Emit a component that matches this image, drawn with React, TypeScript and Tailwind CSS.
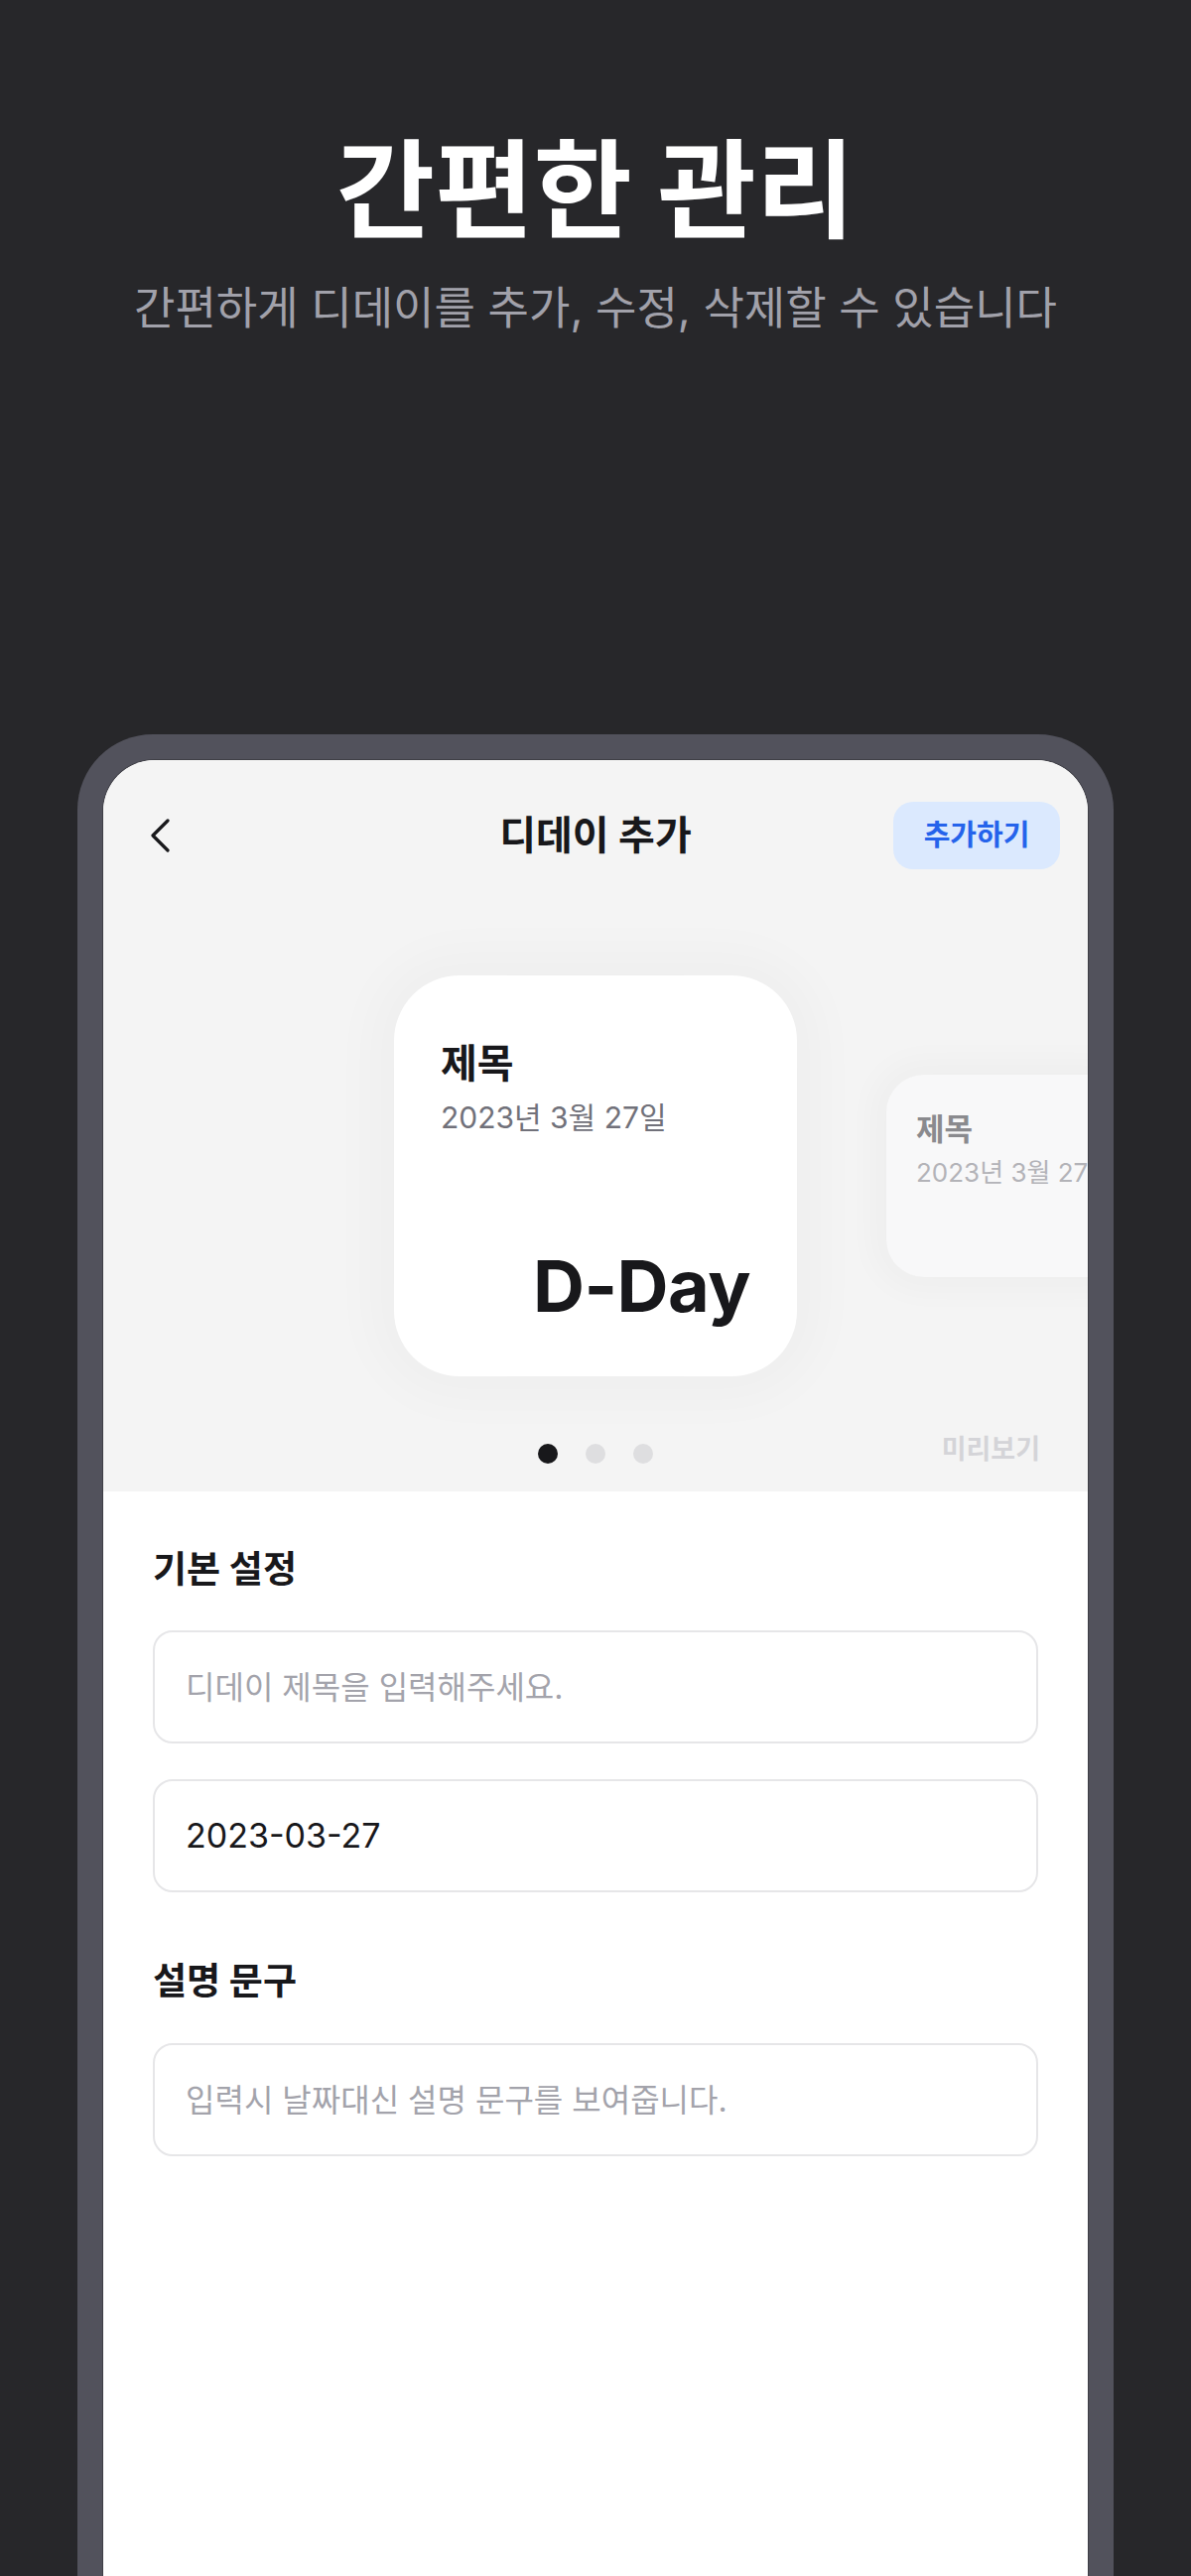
import React from 'react';

const FONT = "font-[Inter,'Noto_Sans_CJK_KR',sans-serif]";

const ChevronLeft = () => (
  <svg width="20" height="34" viewBox="0 0 20 34" fill="none">
    <path d="M17 2 L2 17 L17 32" stroke="#18181b" strokeWidth="3.2" strokeLinecap="round" strokeLinejoin="round" />
  </svg>
);

const Field = ({ placeholder, value }: { placeholder?: string; value?: string }) => (
  <input
    readOnly
    placeholder={placeholder}
    value={value ?? ''}
    className="block w-full h-[114px] rounded-[20px] border-2 border-[#e6e6e8] bg-white px-[31px] text-[34px] text-[#18181b] placeholder:text-[32px] placeholder:text-[#a3a3ab] outline-none"
  />
);

export default function App() {
  return (
    <div className={`h-[2596px] overflow-hidden bg-[#27272a] flex flex-col ${FONT}`}>
      {/* intro copy */}
      <div className="pt-[127px] text-center">
        <h1 className="text-[108px] leading-[1.2] font-bold text-white">간편한 관리</h1>
        <p className="mt-[22px] text-[45px] leading-[1.4] text-[#a1a1aa]">
          간편하게 디데이를 추가, 수정, 삭제할 수 있습니다
        </p>
      </div>

      {/* phone mock */}
      <div className="mt-[398px] flex-1 px-[78px] flex flex-col">
        <div className="flex-1 rounded-t-[76px] bg-[#52525c] px-[26px] pt-[26px] flex flex-col">
          <div className="flex-1 overflow-hidden rounded-t-[52px] bg-white shadow-[0_0_0_1px_#3f3f46]">
            {/* preview area */}
            <div className="bg-[#f4f4f4] pb-[19px]">
              <div className="grid grid-cols-[minmax(0,1fr)_auto_minmax(0,1fr)] items-center px-[28px] pt-[42px]">
                <div className="flex">
                  <button className="ml-[20px]">
                    <ChevronLeft />
                  </button>
                </div>
                <h2 className="text-[40px] leading-none font-bold text-[#18181b]">디데이 추가</h2>
                <div className="flex justify-end">
                  <button className="w-[168px] h-[68px] rounded-[20px] bg-[#dbe9fe] text-[29px] font-bold text-[#2563eb]">
                    추가하기
                  </button>
                </div>
              </div>

              <div className="mt-[107px] grid grid-cols-[minmax(0,1fr)_auto_minmax(0,1fr)] items-center">
                <div />
                <div className="w-[406px] h-[404px] rounded-[66px] bg-white px-[47px] pt-[63px] pb-[55px] flex flex-col shadow-[0_0_50px_24px_rgba(0,0,0,0.022)]">
                  <div className="text-[40px] leading-[1.3] font-bold text-[#18181b]">제목</div>
                  <div className="mt-[9px] text-[30px] leading-[1.3] text-[#71717a]">2023년 3월 27일</div>
                  <div className="mt-auto text-right text-[72px] leading-none font-bold tracking-[-0.5px] text-[#18181b]">
                    D-Day
                  </div>
                </div>
                <div className="pl-[90px] flex">
                  <div className="shrink-0 w-[250px] h-[204px] rounded-[38px] bg-[#f8f8f9] pl-[30px] pt-[35px] whitespace-nowrap shadow-[0_0_30px_16px_rgba(0,0,0,0.025)]">
                    <div className="text-[31px] leading-[1.3] font-bold text-[#8a8a8e]">제목</div>
                    <div className="mt-[7px] text-[26px] leading-[1.3] text-[#b3b3b8]">2023년 3월 27일</div>
                  </div>
                </div>
              </div>

              <div className="mt-[60px] grid grid-cols-[minmax(0,1fr)_auto_minmax(0,1fr)] items-center">
                <div />
                <div className="flex gap-[28px]">
                  <span className="w-[20px] h-[20px] rounded-full bg-[#18181b]" />
                  <span className="w-[20px] h-[20px] rounded-full bg-[#dedee0]" />
                  <span className="w-[20px] h-[20px] rounded-full bg-[#dedee0]" />
                </div>
                <div className="flex justify-end pr-[48px] pb-[10px]">
                  <span className="text-[27px] leading-none font-bold text-[#d4d4d8]">미리보기</span>
                </div>
              </div>
            </div>

            {/* form */}
            <div className="px-[50px] pt-[55px]">
              <h3 className="text-[37px] leading-[1.3] font-bold text-[#18181b]">기본 설정</h3>
              <div className="mt-[37px] flex flex-col gap-[36px]">
                <Field placeholder="디데이 제목을 입력해주세요." />
                <Field value="2023-03-27" />
              </div>
              <h3 className="mt-[66px] text-[37px] leading-[1.3] font-bold text-[#18181b]">설명 문구</h3>
              <div className="mt-[38px]">
                <Field placeholder="입력시 날짜대신 설명 문구를 보여줍니다." />
              </div>
            </div>
          </div>
        </div>
      </div>
    </div>
  );
}
